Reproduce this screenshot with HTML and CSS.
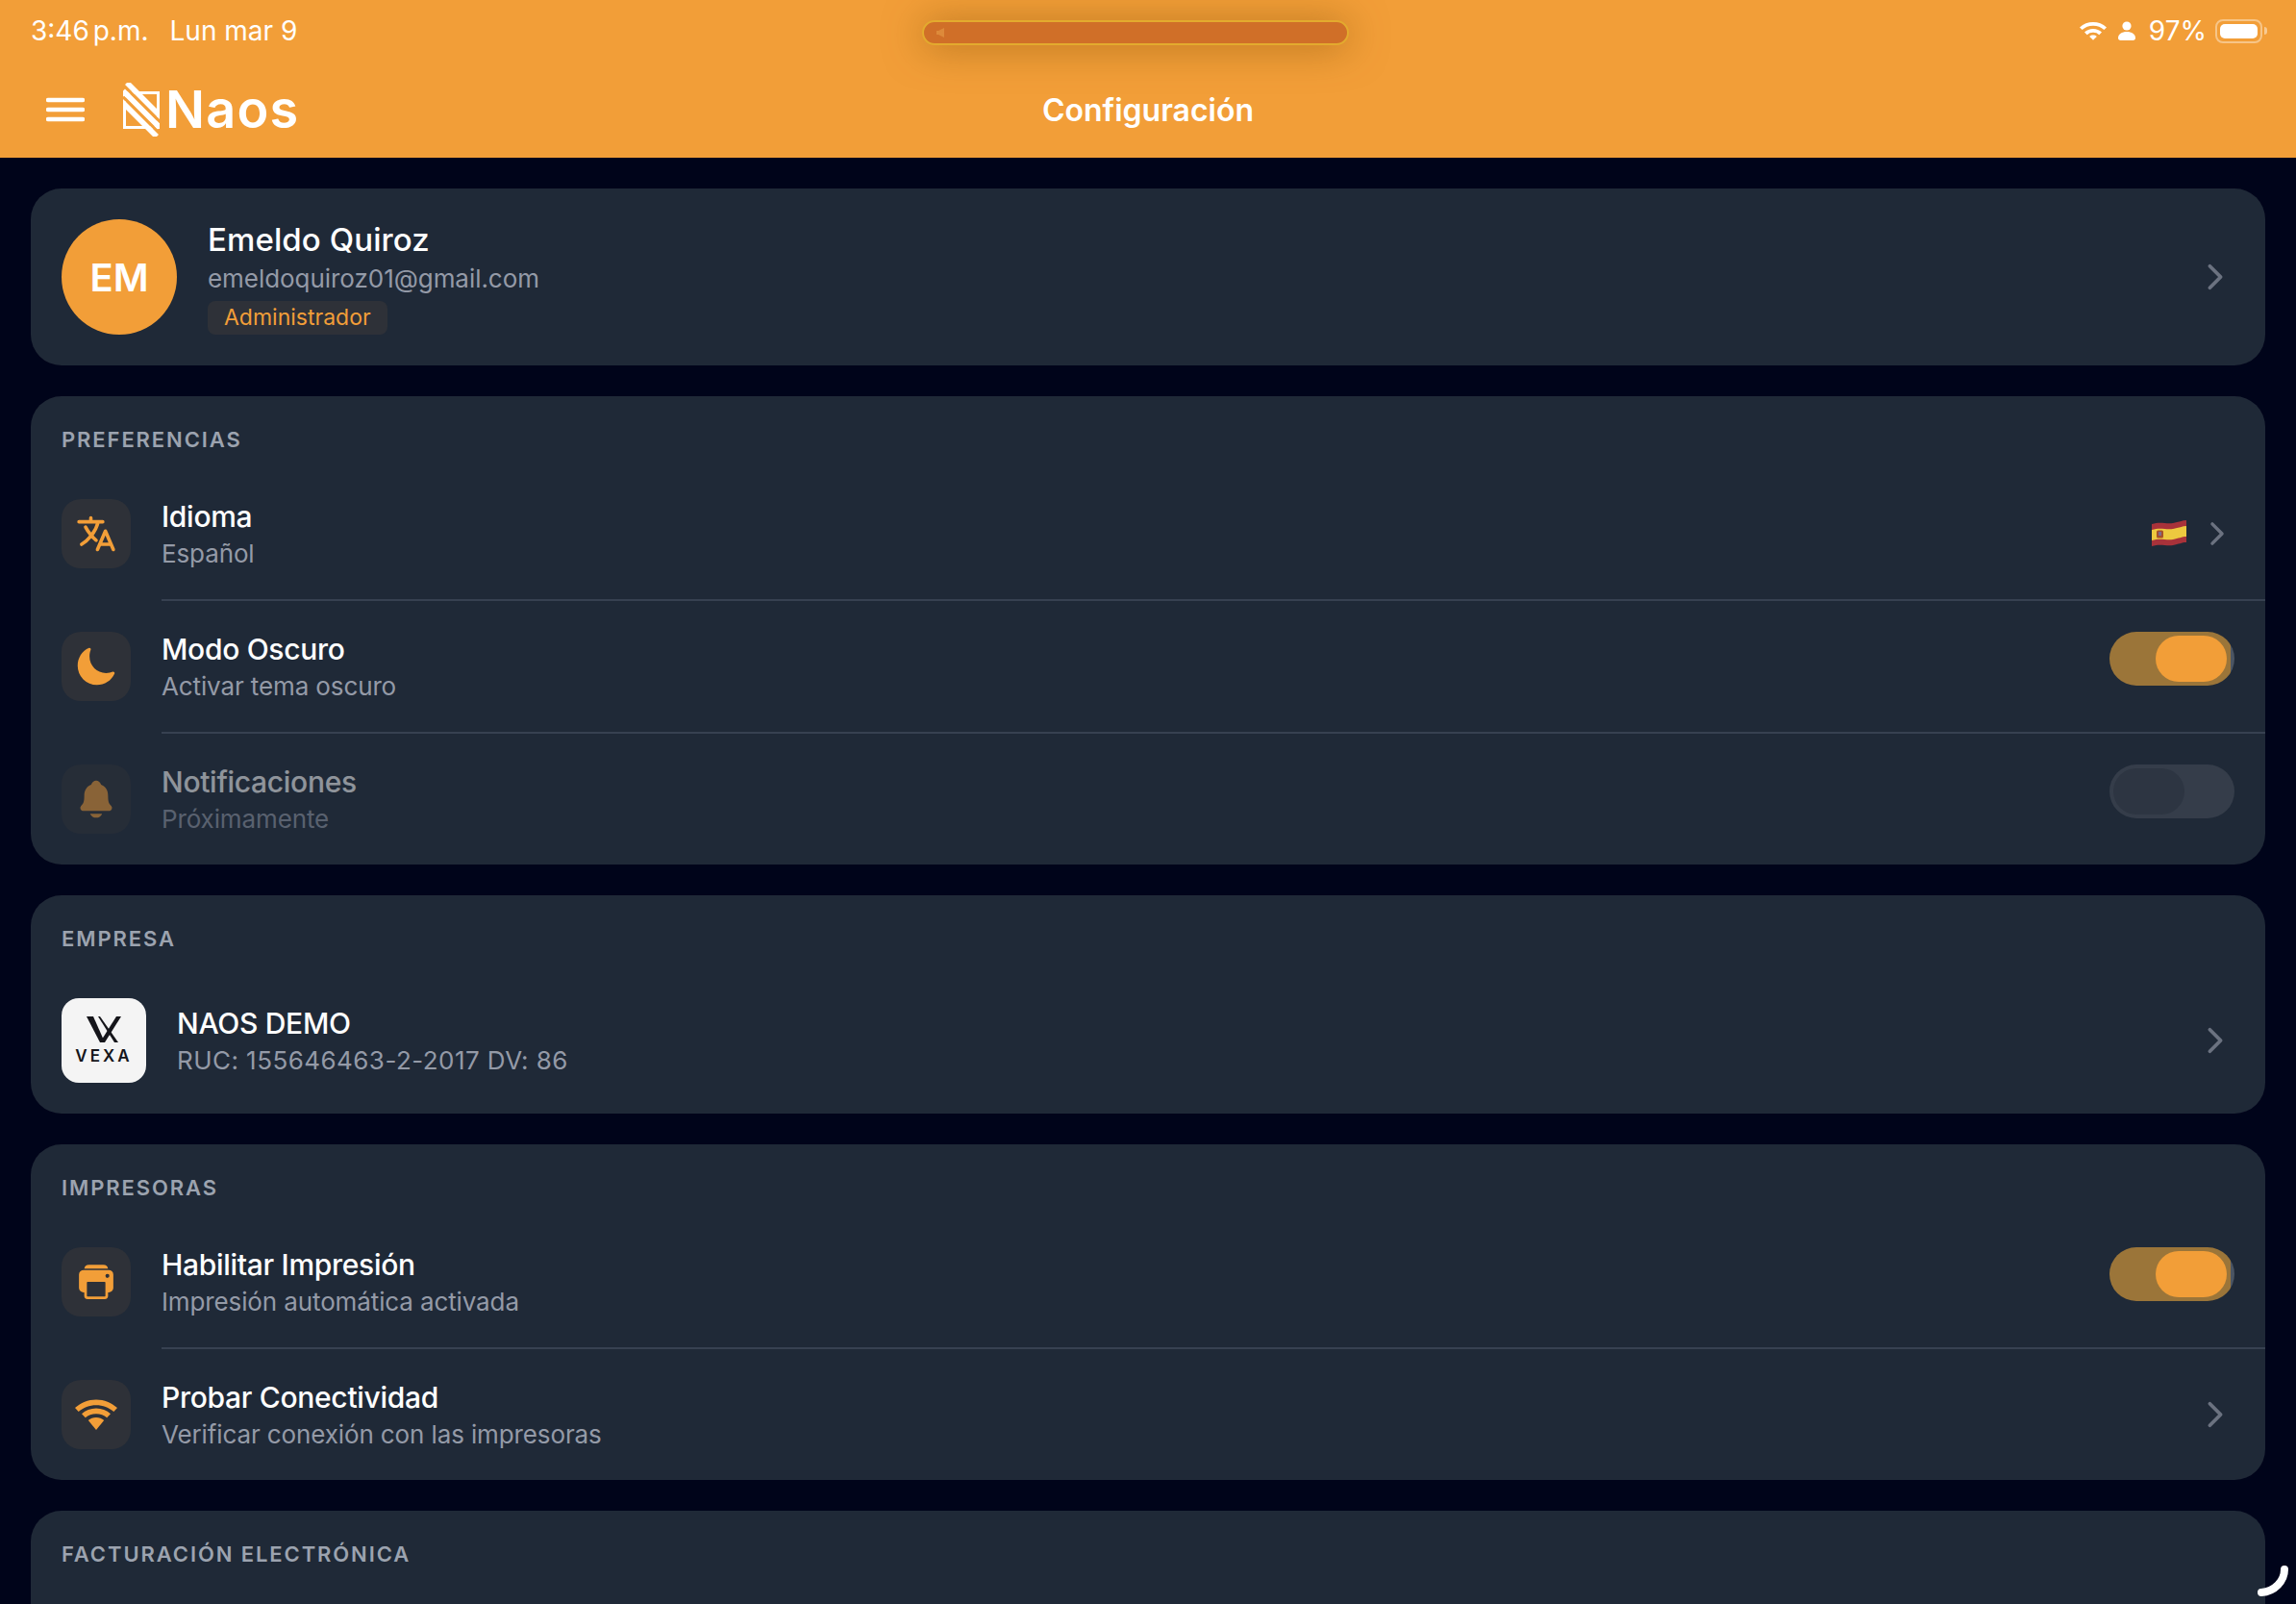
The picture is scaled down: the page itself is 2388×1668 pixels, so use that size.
FILE: index.html
```html
<!DOCTYPE html>
<html lang="es">
<head>
    <meta charset="UTF-8">
    <title>Configuración</title>
    <link rel="stylesheet" href="styles.css">
</head>
<body>
    <header class="top">
        <div class="status-bar">
            <div class="status-left">
                <span class="status-time">3:46 p.m.</span>
                <span>Lun mar 9</span>
            </div>
            <div class="status-right">
                <svg class="status-wifi" viewBox="0 0 28 20"><path d="M14 1a21 21 0 0 1 14 5.400l-2.600 2.700A17 17 0 0 0 14 4.800 17 17 0 0 0 2.600 9.100L0 6.400A21 21 0 0 1 14 1z"/><path d="M14 8a13 13 0 0 1 9 3.500l-2.700 2.700a9 9 0 0 0-6.300-2.400 9 9 0 0 0-6.300 2.400L5 11.500A13 13 0 0 1 14 8z"/><path d="M14 14.500c1.500 0 2.800.5 3.800 1.400L14 19.800l-3.800-3.900c1-.9 2.300-1.400 3.800-1.400z"/></svg>
                <svg class="status-person" viewBox="0 0 18 20"><circle cx="9" cy="5" r="4.600"/><path d="M0 17.500C0 13.500 4 11 9 11s9 2.500 9 6.500c0 1.500-1 2.500-2.500 2.500h-13C1 20 0 19 0 17.500z"/></svg>
                <span>97%</span>
                <div class="battery"><div class="battery-fill"></div></div>
                <div class="battery-nub"></div>
            </div>
        </div>
        <nav class="nav">
            <div class="nav-left">
                <svg class="menu-icon" viewBox="0 0 40 26"><path d="M2 3h36M2 13h36M2 23h36"/></svg>
                <div class="brand">
                    <svg class="brand-mark" viewBox="0 0 38 56">
                        <path class="mark-box" d="M1.500 10.500h35v36h-35z"/>
                        <path class="mark-gap" d="M0 2.250l40 40M0 14.750l40 40M0 -6l12 12"/>
                        <path class="mark-band" d="M4 0l34 34M0 8.500l38 38M0 21l35 35"/>
                    </svg>
                    <span class="brand-name">Naos</span>
                </div>
            </div>
            <div class="nav-title">Configuración</div>
            <div></div>
        </nav>
    </header>

    <div class="pill"><svg viewBox="0 0 10 12"><path d="M9 1v10L3 8H1V4h2z"/></svg></div>

    <main class="content">
        <section class="card profile">
            <div class="avatar">EM</div>
            <div class="profile-text">
                <div class="profile-name">Emeldo Quiroz</div>
                <div class="profile-email">emeldoquiroz01@gmail.com</div>
                <span class="badge">Administrador</span>
            </div>
            <svg class="chevron" viewBox="0 0 512 512"><path d="M184 112l144 144-144 144"/></svg>
        </section>

        <section class="card">
            <h2 class="card-title">Preferencias</h2>
            <div class="row">
                <div class="row-icon">
                    <svg class="icon icon-line" viewBox="0 0 512 512"><path d="M48 112h288M192 64v48M272 448l96-224 96 224M301.500 384h133M281.300 112S257 206 199 277 80 384 80 384"/><path d="M256 336s-35-27-72-75-56-85-56-85"/></svg>
                </div>
                <div class="row-body">
                    <div class="row-text">
                        <div class="row-title">Idioma</div>
                        <div class="row-sub">Español</div>
                    </div>
                    <div class="row-end">
                        <svg class="flag" viewBox="0 0 36 27">
                            <path fill="#a8323a" d="M0 4C9 1 14 4 22 3 28 2 32 0 36 0v23c-5 0-8 2-14 3-8 1-13-2-22 1z"/>
                            <path fill="#edc93f" d="M0 10C9 7 14 10 22 9c6-1 10-3 14-3v11c-5 0-8 2-14 3-8 1-13-2-22 1z"/>
                            <rect x="5" y="10.500" width="7" height="8" rx="1.500" fill="#a5502c"/>
                            <rect x="7" y="12" width="3" height="4" fill="#7f6a8c"/>
                        </svg>
                        <svg class="chevron chevron-small" viewBox="0 0 512 512"><path d="M184 112l144 144-144 144"/></svg>
                    </div>
                </div>
            </div>
            <div class="row">
                <div class="row-icon">
                    <svg class="icon" viewBox="0 0 512 512"><path d="M264 480A232 232 0 0 1 32 248c0-94 54-178.280 137.610-214.670a16 16 0 0 1 21.060 21.060C181.070 76.430 176 104.660 176 136c0 110.280 89.720 200 200 200 31.340 0 59.570-5.070 81.610-14.670a16 16 0 0 1 21.060 21.060C442.280 425.860 358 480 264 480z"/></svg>
                </div>
                <div class="row-body">
                    <div class="row-text">
                        <div class="row-title">Modo Oscuro</div>
                        <div class="row-sub">Activar tema oscuro</div>
                    </div>
                    <div class="switch on"><div class="thumb"></div></div>
                </div>
            </div>
            <div class="row disabled">
                <div class="row-icon">
                    <svg class="icon" viewBox="0 0 512 512"><path d="M440.080 341.310c-1.660-2-3.290-4-4.890-5.930-22-26.610-35.310-42.670-35.310-118 0-39-9.330-71-27.720-95-13.560-17.730-31.890-31.180-56.050-41.120a3 3 0 0 1-.82-.67C306.600 51.490 282.820 32 256 32s-50.590 19.490-59.280 48.560a3.130 3.130 0 0 1-.81.65c-56.380 23.210-83.780 67.740-83.780 136.140 0 75.360-13.290 91.420-35.310 118-1.600 1.930-3.230 3.890-4.890 5.930a35.160 35.160 0 0 0-4.650 37.620c6.170 13 19.320 21.070 34.330 21.070H410.500c14.940 0 28-8.060 34.190-21a35.170 35.170 0 0 0-4.610-37.660zM256 480a80.060 80.060 0 0 0 70.440-42.130 4 4 0 0 0-3.540-5.870H189.120a4 4 0 0 0-3.550 5.870A80.060 80.060 0 0 0 256 480z"/></svg>
                </div>
                <div class="row-body">
                    <div class="row-text">
                        <div class="row-title">Notificaciones</div>
                        <div class="row-sub">Próximamente</div>
                    </div>
                    <div class="switch off"><div class="thumb"></div></div>
                </div>
            </div>
        </section>

        <section class="card">
            <h2 class="card-title">Empresa</h2>
            <div class="row">
                <div class="company-logo">
                    <svg viewBox="0 0 36 28"><path d="M0 0h7l12 27h-5z"/><path d="M36 0h-5L14 27h5z"/><path d="M12 0h2l19 27h-4z"/></svg>
                    <span class="company-logo-name">VEXA</span>
                </div>
                <div class="row-body">
                    <div class="row-text">
                        <div class="row-title">NAOS DEMO</div>
                        <div class="row-sub row-sub-digits">RUC: 155646463-2-2017 DV: 86</div>
                    </div>
                    <svg class="chevron" viewBox="0 0 512 512"><path d="M184 112l144 144-144 144"/></svg>
                </div>
            </div>
        </section>

        <section class="card">
            <h2 class="card-title">Impresoras</h2>
            <div class="row">
                <div class="row-icon">
                    <svg class="icon" viewBox="0 0 512 512"><path fill-rule="evenodd" d="M408 112H106a58 58 0 0 0-58 58v158a56 56 0 0 0 56 56h8v39.680A40.320 40.320 0 0 0 152.320 464h207.360A40.320 40.320 0 0 0 400 423.680V384h8a56 56 0 0 0 56-56V168a56 56 0 0 0-56-56zm-40 311.680a8.350 8.350 0 0 1-8.320 8.320H152.320a8.350 8.350 0 0 1-8.320-8.320V264.320a8.350 8.350 0 0 1 8.320-8.320h207.360a8.350 8.350 0 0 1 8.320 8.320zm26-215.760a24 24 0 1 1 22-22 24 24 0 0 1-22 22zM344 48H168a56.090 56.090 0 0 0-55.420 48h286.840A56.090 56.090 0 0 0 344 48z"/></svg>
                </div>
                <div class="row-body">
                    <div class="row-text">
                        <div class="row-title">Habilitar Impresión</div>
                        <div class="row-sub">Impresión automática activada</div>
                    </div>
                    <div class="switch on"><div class="thumb"></div></div>
                </div>
            </div>
            <div class="row">
                <div class="row-icon">
                    <svg class="icon" viewBox="0 0 44 44"><path d="M22 6.500c8.500 0 16 3.200 22 8.600l-3.700 4C35.300 14.700 29 12.300 22 12.300S8.700 14.700 3.700 19.100L0 15.100C6 9.700 13.500 6.500 22 6.500z"/><path d="M22 15.500c5.800 0 11 2.100 15 5.700l-3.800 4.100C30.200 22.700 26.300 21.200 22 21.200s-8.200 1.500-11.200 4.100L7 21.200c4-3.600 9.200-5.700 15-5.700z"/><path d="M22 25c3.200 0 6 1.100 8.200 3L22 38l-8.200-10c2.200-1.900 5-3 8.200-3z"/></svg>
                </div>
                <div class="row-body">
                    <div class="row-text">
                        <div class="row-title">Probar Conectividad</div>
                        <div class="row-sub">Verificar conexión con las impresoras</div>
                    </div>
                    <svg class="chevron" viewBox="0 0 512 512"><path d="M184 112l144 144-144 144"/></svg>
                </div>
            </div>
        </section>

        <section class="card card-last">
            <h2 class="card-title">Facturación Electrónica</h2>
        </section>
    </main>

    <svg class="spinner" viewBox="0 0 36 36"><path d="M30 6C30 18 20 29 6 30"/></svg>
</body>
</html>
```

FILE: styles.css
```css
* {
    box-sizing: border-box;
}
html, body {
    margin: 0;
    height: 1668px;
    overflow: hidden;
}
body {
    position: relative;
    display: flex;
    flex-direction: column;
    background-color: #00041a;
    font-family: Inter, "Noto Sans", sans-serif;
    color: #fff;
}

/* top bar */
.top {
    flex: none;
    background-color: #f29e38;
    height: 164px;
}
.status-bar {
    height: 64px;
    display: flex;
    justify-content: space-between;
    align-items: center;
    padding: 0 30px 0 32px;
    font-size: 28px;
}
.status-left {
    display: flex;
    gap: 22px;
}
.status-time {
    word-spacing: -4px;
}
.status-right {
    display: flex;
    align-items: center;
}
.status-wifi {
    width: 28px;
    height: 20px;
    fill: #fff;
}
.status-person {
    width: 18px;
    height: 20px;
    fill: #fff;
    margin: 0 14px 0 12px;
}
.battery {
    width: 49px;
    height: 25px;
    margin-left: 9px;
    padding: 3px;
    border: 2px solid rgba(255, 255, 255, 0.4);
    border-radius: 8px;
}
.battery-fill {
    height: 100%;
    background-color: #fff;
    border-radius: 5px;
}
.battery-nub {
    width: 3px;
    height: 8px;
    margin-left: 2px;
    background-color: rgba(255, 255, 255, 0.45);
    border-radius: 0 3px 3px 0;
}
.nav {
    height: 100px;
    display: grid;
    grid-template-columns: 1fr auto 1fr;
    align-items: center;
    padding: 0 48px;
}
.nav-left {
    display: flex;
    align-items: center;
    gap: 40px;
}
.menu-icon {
    width: 40px;
    height: 26px;
    fill: none;
    stroke: #fff;
    stroke-width: 4.500;
    stroke-linecap: round;
}
.brand {
    display: flex;
    align-items: center;
    gap: 6px;
}
.brand-mark {
    width: 38px;
    height: 56px;
    fill: none;
    stroke-width: 3;
}
.mark-box {
    stroke: #fff;
}
.mark-band {
    stroke: #fff;
    stroke-width: 5.600;
}
.mark-gap {
    stroke: #f29e38;
    stroke-width: 3.200;
}
.brand-name {
    font-size: 54px;
    font-weight: 600;
    line-height: 56px;
    letter-spacing: 1.200px;
}
.nav-title {
    font-size: 32px;
    font-weight: 600;
}
.pill {
    position: absolute;
    left: 959px;
    top: 21px;
    width: 444px;
    height: 26px;
    display: flex;
    align-items: center;
    padding-left: 12px;
    background-color: #d06f28;
    border: 2px solid #e3aa2e;
    border-radius: 13px;
    box-shadow: 0 2px 40px rgba(130, 80, 10, 0.55);
}
.pill svg {
    width: 10px;
    height: 12px;
    fill: #dd8a3a;
}

/* cards */
.content {
    flex: 1;
    min-height: 0;
    display: flex;
    flex-direction: column;
    gap: 32px;
    padding: 32px 32px 0;
}
.card {
    flex: none;
    background-color: #1f2937;
    border-radius: 32px;
}
.card-last {
    flex: 1;
    border-radius: 32px 32px 0 0;
}
.card-title {
    margin: 0;
    padding: 32px 32px 16px;
    font-size: 22px;
    font-weight: 600;
    line-height: 27px;
    letter-spacing: 1.900px;
    text-transform: uppercase;
    color: #9ca3af;
}
.profile {
    display: flex;
    align-items: center;
    padding: 32px;
}
.avatar {
    width: 120px;
    height: 120px;
    display: flex;
    justify-content: center;
    align-items: center;
    background-color: #f29e38;
    border-radius: 50%;
    font-size: 40px;
    font-weight: 600;
}
.profile-text {
    flex: 1;
    margin-left: 32px;
}
.profile-name {
    font-size: 33px;
    font-weight: 500;
    line-height: 42px;
    letter-spacing: 0.1px;
}
.profile-email {
    font-size: 26px;
    line-height: 40px;
    letter-spacing: -0.05px;
    color: #949aa7;
}
.badge {
    display: inline-block;
    margin-top: 3px;
    padding: 0 17px;
    height: 35px;
    background-color: #2e3138;
    border-radius: 8px;
    font-size: 23px;
    line-height: 35px;
    color: #f29e38;
}
.chevron {
    width: 40px;
    height: 40px;
    fill: none;
    stroke: #6b7280;
    stroke-width: 48;
    stroke-linecap: round;
    stroke-linejoin: round;
}
.chevron-small {
    width: 36px;
    height: 36px;
    margin-left: 14px;
}

/* rows */
.row {
    display: flex;
    padding-left: 32px;
}
.row-icon {
    flex: none;
    width: 72px;
    height: 72px;
    margin: 32px 32px 32px 0;
    display: flex;
    justify-content: center;
    align-items: center;
    background-color: #2e3138;
    border-radius: 20px;
}
.icon {
    width: 44px;
    height: 44px;
    fill: #f29e38;
}
.icon-line {
    fill: none;
    stroke: #f29e38;
    stroke-width: 42;
    stroke-linecap: round;
    stroke-linejoin: round;
}
.row-body {
    flex: 1;
    display: flex;
    justify-content: space-between;
    align-items: center;
    padding: 32px 32px 32px 0;
    border-bottom: 2px solid #374151;
}
.row:last-child .row-body {
    border-bottom: none;
}
.row-text {
    height: 72px;
}
.row-title {
    font-size: 30px;
    font-weight: 500;
    line-height: 36px;
    letter-spacing: -0.3px;
}
.row-sub {
    margin-top: 3px;
    font-size: 26px;
    line-height: 36px;
    letter-spacing: -0.12px;
    color: #949aa7;
}
.row-sub-digits {
    letter-spacing: 0.45px;
}
.row-end {
    display: flex;
    align-items: center;
}
.flag {
    width: 36px;
    height: 27px;
    margin-bottom: 2px;
}
.disabled .row-icon, .disabled .row-text {
    opacity: 0.5;
}

/* switch */
.switch {
    align-self: flex-start;
    width: 130px;
    height: 56px;
    padding: 4px;
    border-radius: 28px;
}
.switch.on {
    display: flex;
    justify-content: flex-end;
    background-color: #4b5563;
    background-image: linear-gradient(#9b7539, #9b7539);
    background-size: 126px 56px;
    background-repeat: no-repeat;
}
.switch.off {
    background-color: #353d4a;
}
.thumb {
    width: 74px;
    height: 48px;
    border-radius: 24px;
}
.switch.on .thumb {
    margin-right: 4px;
    background-color: #f29e38;
}
.switch.off .thumb {
    background-color: #2d3542;
}

/* company */
.company-logo {
    flex: none;
    width: 88px;
    height: 88px;
    margin: 32px 32px 32px 0;
    display: flex;
    flex-direction: column;
    align-items: center;
    padding-top: 19px;
    gap: 4px;
    background-color: #f4f4f4;
    border-radius: 18px;
}
.company-logo svg {
    width: 36px;
    height: 28px;
    fill: #15151a;
}
.company-logo-name {
    font-size: 17px;
    font-weight: 600;
    line-height: 18px;
    letter-spacing: 3px;
    color: #15151a;
}

/* spinner over the corner */
.spinner {
    position: absolute;
    left: 2346px;
    top: 1626px;
    width: 36px;
    height: 36px;
    fill: none;
    stroke: #fff;
    stroke-width: 8;
    stroke-linecap: round;
}
```
